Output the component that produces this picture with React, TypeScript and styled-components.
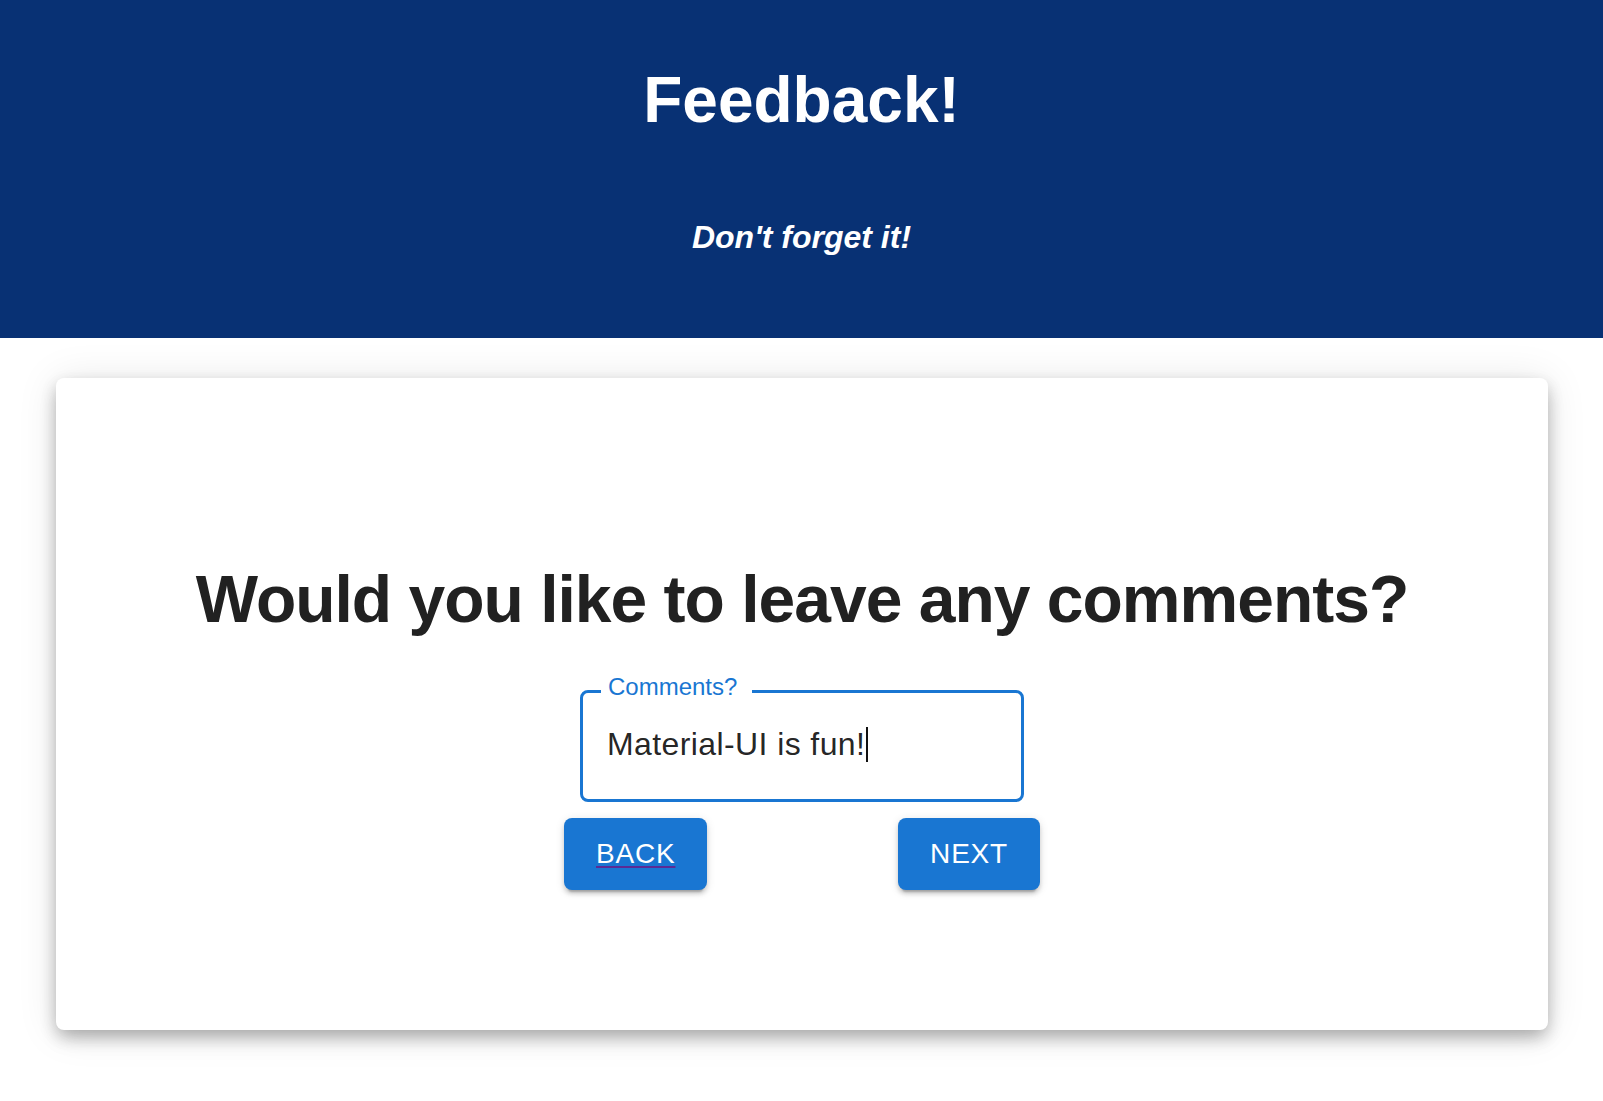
import React from "react";
import styled, { createGlobalStyle } from "styled-components";

const GlobalStyle = createGlobalStyle`
  html, body {
    margin: 0;
    padding: 0;
    background: #ffffff;
  }
  body {
    font-family: "Liberation Sans", Helvetica, Arial, sans-serif;
  }
  * { box-sizing: border-box; }
`;

const Page = styled.div`
  display: flex;
  flex-direction: column;
`;

const Header = styled.header`
  background: #083174;
  color: #ffffff;
  padding: 63px 0 82px;
  display: flex;
  flex-direction: column;
  align-items: center;
`;

const Title = styled.h1`
  margin: 0;
  font-family: "Liberation Sans", Helvetica, Arial, sans-serif;
  font-weight: 700;
  font-size: 64px;
  line-height: 74px;
`;

const Subtitle = styled.p`
  margin: 82px 0 0;
  font-family: "Liberation Sans", Helvetica, Arial, sans-serif;
  font-weight: 700;
  font-style: italic;
  font-size: 32px;
  line-height: 37px;
`;

const Card = styled.main`
  margin: 40px 55px 60px 56px;
  background: #ffffff;
  border-radius: 8px;
  box-shadow: 0 10px 20px -4px rgba(0, 0, 0, 0.22),
    0 6px 16px rgba(0, 0, 0, 0.14), 0 2px 40px rgba(0, 0, 0, 0.1);
  padding: 183px 0 140px;
  display: flex;
  flex-direction: column;
  align-items: center;
`;

const Question = styled.h2`
  margin: 0;
  font-family: "Liberation Sans", Helvetica, Arial, sans-serif;
  font-weight: 700;
  font-size: 66px;
  letter-spacing: -1px;
  line-height: normal;
  color: #212121;
  text-align: center;
`;

const Field = styled.div`
  position: relative;
  margin-top: 53px;
  width: 444px;
  border: 3px solid #1976d2;
  border-radius: 8px;
  padding: 28px 24px 32px;
  font-family: "Liberation Sans", Helvetica, Arial, sans-serif;
  font-size: 32px;
  letter-spacing: 0.4px;
  line-height: 46px;
  color: rgba(0, 0, 0, 0.87);
  background: #ffffff;
`;

const FieldLabel = styled.span`
  position: absolute;
  top: -18px;
  left: 18px;
  padding: 0 15px 0 7px;
  background: #ffffff;
  font-family: "Liberation Sans", Helvetica, Arial, sans-serif;
  font-size: 24px;
  letter-spacing: 0;
  line-height: 24px;
  color: #1976d2;
`;

const Caret = styled.span`
  display: inline-block;
  width: 2px;
  height: 35px;
  margin-left: 1px;
  background: #111111;
  vertical-align: -7px;
`;

const ButtonRow = styled.div`
  margin-top: 16px;
  width: 476px;
  display: flex;
  justify-content: space-between;
`;

const Button = styled.a<{ $underline?: boolean }>`
  display: inline-flex;
  align-items: center;
  justify-content: center;
  height: 72px;
  padding: 0 32px;
  border-radius: 8px;
  background: #1976d2;
  color: #ffffff;
  font-family: "Liberation Sans", Helvetica, Arial, sans-serif;
  font-weight: 400;
  font-size: 28px;
  letter-spacing: 0.8px;
  text-transform: uppercase;
  cursor: pointer;
  box-shadow: 0 6px 2px -4px rgba(0, 0, 0, 0.2),
    0 4px 4px 0 rgba(0, 0, 0, 0.14), 0 2px 10px 0 rgba(0, 0, 0, 0.12);
  text-decoration: ${(p) => (p.$underline ? "underline" : "none")};
  text-decoration-color: #5b2a95;
  text-decoration-thickness: 2px;
  text-underline-offset: 3px;
`;

export default function App() {
  return (
    <>
      <GlobalStyle />
      <Page>
        <Header>
          <Title>Feedback!</Title>
          <Subtitle>Don't forget it!</Subtitle>
        </Header>
        <Card>
          <Question>Would you like to leave any comments?</Question>
          <Field>
            <FieldLabel>Comments?</FieldLabel>
            Material-UI is fun!
            <Caret />
          </Field>
          <ButtonRow>
            <Button $underline href="#back">
              Back
            </Button>
            <Button>Next</Button>
          </ButtonRow>
        </Card>
      </Page>
    </>
  );
}
